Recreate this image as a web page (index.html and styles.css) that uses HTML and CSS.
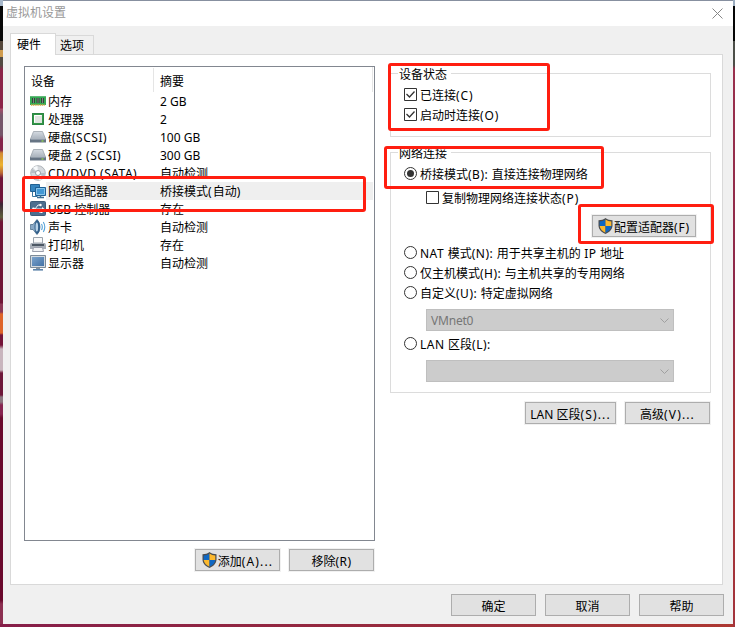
FILE: index.html
```html
<!DOCTYPE html>
<html lang="zh-CN">
<head>
<meta charset="utf-8">
<title>虚拟机设置</title>
<link rel="stylesheet" href="styles.css">
</head>
<body>
<svg width="0" height="0" class="defs">
  <defs>
    <linearGradient id="disk" x1="0" y1="0" x2="0" y2="1"><stop offset="0" stop-color="#d5dbe2"/><stop offset="1" stop-color="#a9b2bc"/></linearGradient>
    <linearGradient id="screen" x1="0" y1="0" x2="1" y2="1"><stop offset="0" stop-color="#7ba3cc"/><stop offset="1" stop-color="#4472a6"/></linearGradient>
    <symbol id="shield" viewBox="0 0 14 16">
      <path d="M7 0C5.300 1.500 2.500 2.200 0 2.300v5.400C.2 11.500 3.200 14.200 7 16c3.800-1.800 6.800-4.500 7-8.300V2.300C11.500 2.200 8.700 1.500 7 0z" fill="#4b4d50"/>
      <path d="M7 1.500C5.400 2.800 3.400 3.400 1.200 3.500V8H7z" fill="#0e67c3"/>
      <path d="M7 1.500c1.600 1.300 3.600 1.900 5.800 2V8H7z" fill="#fdb92d"/>
      <path d="M1.200 8c.3 3 2.600 5.200 5.800 6.700V8z" fill="#fdb92d"/>
      <path d="M12.800 8c-.3 3-2.600 5.200-5.800 6.700V8z" fill="#0e67c3"/>
    </symbol>
    <symbol id="hdd" viewBox="0 0 16 16">
      <path d="M3.500 2.500h9l3 7.500H.5z" fill="url(#disk)" stroke="#9aa2ab" stroke-width=".8"/>
      <path d="M0 10h16v3.500H0z" fill="#667484"/>
      <path d="M.5 10h15" stroke="#b7c0c9"/>
      <path d="M11.500 12h2" stroke="#8ed04f" stroke-width="1.400"/>
    </symbol>
  </defs>
</svg>
<div class="window">
  <header class="titlebar"><span>虚拟机设置</span>
    <svg class="close" width="11" height="11" viewBox="0 0 11 11"><path d="M.5.5l10 10M10.500.5l-10 10" stroke="#868686" fill="none"/></svg>
  </header>
  <nav class="tabs"><div class="tab active">硬件</div><div class="tab">选项</div></nav>
  <main class="panel">
    <section class="left">
      <div class="list">
        <div class="head"><span class="c1">设备</span><span class="c2">摘要</span></div>
        <div class="row"><svg viewBox="0 0 16 16"><path d="M0 3h16v9H0z" fill="#35aa55"/><path d="M0 3h16v1H0z" fill="#62ba78"/><path d="M2 5h3v5H2zM6.500 5h3v5h-3zM11 5h3v5h-3z" fill="#34423a"/><path d="M3.500 5v5M8 5v5M12.500 5v5" stroke="#8d9b92" stroke-width=".8"/><path d="M1 12h14" stroke="#d5a644" stroke-width="1.500" stroke-dasharray="1.200 .6"/></svg><span class="name">内存</span><span>2 GB</span></div>
        <div class="row"><svg viewBox="0 0 16 16"><path d="M2 2h12v12H2z" fill="#319746"/><path d="M2.500 2.500h11v11h-11z" fill="none" stroke="#2c8544"/><path d="M4 4h8v8H4z" fill="#dfe4e0"/><path d="M4.500 11.500v-7h7" fill="none" stroke="#fff"/></svg><span class="name">处理器</span><span>2</span></div>
        <div class="row"><svg><use href="#hdd"/></svg><span class="name">硬盘<i>(SCSI)</i></span><span>100 GB</span></div>
        <div class="row"><svg><use href="#hdd"/></svg><span class="name">硬盘 <i>2 (SCSI)</i></span><span>300 GB</span></div>
        <div class="row"><svg viewBox="0 0 16 16"><circle cx="8" cy="8" r="7.300" fill="#d6dade" stroke="#b0b5ba"/><path d="M8 8L3 2.500Q5 1 7.500 1zM8 8l5.500 5Q12 15 9 15z" fill="#f7fafc"/><path d="M8 8L1 8q0-2 1.500-4zM8 8h7q0 2-1 4z" fill="#b8bfc6"/><circle cx="8" cy="8" r="2.500" fill="#fff" stroke="#969ea6"/></svg><span class="name"><i>CD/DVD (SATA)</i></span><span>自动检测</span></div>
        <div class="row selected"><svg viewBox="0 0 16 16"><path d="M.5 1.500h9v7h-9z" fill="#3685bf" stroke="#236293"/><path d="M2.500 9v4.500h5" fill="none" stroke="#39769f"/><path d="M5.500 4.500h10v8h-10z" fill="#4398d4" stroke="#1d5f95"/><path d="M6.500 5.500h8v6h-8z" fill="none" stroke="#87c5eb"/><path d="M7 14.500h7M10.500 12v2" stroke="#3b6f95" stroke-width="1.500"/></svg><span class="name">网络适配器</span><span>桥接模式<i class="dots">(</i>自动<i class="dots">)</i></span></div>
        <div class="row"><svg viewBox="0 0 16 16"><rect x=".5" y=".5" width="15" height="14" rx="1" fill="#4d6e8e" stroke="#3e5d7a"/><path d="M3 8h9M5 8l3-4h2M6 8l3 3h2" fill="none" stroke="#eef4fa"/><circle cx="3.500" cy="8" r="1.400" fill="#fff"/><circle cx="10.500" cy="4" r="1.200" fill="#fff"/><path d="M12 6l2.500 2-2.500 2z" fill="#fff"/><path d="M10.500 10h2v2h-2z" fill="#fff"/></svg><span class="name">USB 控制器</span><span>存在</span></div>
        <div class="row"><svg viewBox="0 0 16 16"><path d="M.5 5.500H3L7 .5Q10 3 10 8t-3 7.500L3 10.500H.5Q-.3 8 .5 5.500z" fill="#8aa9c6" stroke="#4e6e8a" stroke-width=".8"/><path d="M7 .8Q4.500 3 4.500 8T7 15.200Q10 13 10 8T7 .8z" fill="#315f8b"/><ellipse cx="6.800" cy="8" rx="1.300" ry="4.500" fill="#b9d3e8"/><path d="M11.500 5q1.600 3 0 6M13.300 3q3 5 0 10" stroke="#57a3d8" fill="none" stroke-width="1.100"/></svg><span class="name">声卡</span><span>自动检测</span></div>
        <div class="row"><svg viewBox="0 0 16 16"><path d="M3.500.5h9V6h-9z" fill="#fafafa" stroke="#9ca4ad"/><path d="M1 6h14l1 1.500V12H0V7.500z" fill="#a8afb8"/><path d="M2 8h12" stroke="#4c5864" stroke-width="2"/><path d="M3.500 10.500h9l1 4h-11z" fill="#f2f3f5" stroke="#9b9fac"/></svg><span class="name">打印机</span><span>存在</span></div>
        <div class="row"><svg viewBox="0 0 16 16"><path d="M.5.5h15v12H.5z" fill="#d4dae0" stroke="#7d8b98"/><path d="M2 2h12v9H2z" fill="url(#screen)"/><path d="M6 13h4v1H6z" fill="#8a96a1"/><path d="M3 14.800h10" stroke="#5e84ab" stroke-width="1.600"/></svg><span class="name">显示器</span><span>自动检测</span></div>
      </div>
      <div class="actions"><button class="w86"><svg class="shield"><use href="#shield"/></svg><span>添加<i class="dots">(A)...</i></span></button><button class="w86"><span>移除<i>(R)</i></span></button></div>
    </section>
    <section class="right">
      <div class="group status"><div class="legend">设备状态</div>
        <label class="opt"><svg class="mark"><path d="M.5.5h12v12H.5z" fill="#fff" stroke="#333"/><path d="M2.500 6l3 3 5-5.500" fill="none" stroke="#333" stroke-width="1.300"/></svg><span>已连接<i class="wide">(C)</i></span></label>
        <label class="opt"><svg class="mark"><path d="M.5.5h12v12H.5z" fill="#fff" stroke="#333"/><path d="M2.500 6l3 3 5-5.500" fill="none" stroke="#333" stroke-width="1.300"/></svg><span>启动时连接<i class="wide">(O)</i></span></label>
      </div>
      <div class="group network"><div class="legend">网络连接</div>
        <label class="opt bridged"><svg class="mark"><circle cx="6.500" cy="6.500" r="6" fill="#fff" stroke="#333"/><circle cx="6.500" cy="6.500" r="3.500" fill="#333"/></svg><span>桥接模式<i>(B):</i> 直接连接物理网络</span></label>
        <label class="opt sub"><svg class="mark"><path d="M.5.5h12v12H.5z" fill="#fff" stroke="#333"/></svg><span>复制物理网络连接状态<i class="wide">(P)</i></span></label>
        <button class="config"><svg class="shield"><use href="#shield"/></svg><span>配置适配器<i class="wide">(F)</i></span></button>
        <label class="opt"><svg class="mark"><circle cx="6.500" cy="6.500" r="6" fill="#fff" stroke="#333"/></svg><span><i>NAT</i> 模式<i>(N):</i> 用于共享主机的 <i>IP</i> 地址</span></label>
        <label class="opt"><svg class="mark"><circle cx="6.500" cy="6.500" r="6" fill="#fff" stroke="#333"/></svg><span>仅主机模式<i>(H):</i> 与主机共享的专用网络</span></label>
        <label class="opt"><svg class="mark"><circle cx="6.500" cy="6.500" r="6" fill="#fff" stroke="#333"/></svg><span>自定义<i>(U):</i> 特定虚拟网络</span></label>
        <div class="select"><span>VMnet0</span><svg width="9" height="5"><path d="M.5.5l4 4 4-4" fill="none" stroke="#a0a0a0"/></svg></div>
        <label class="opt lan"><svg class="mark"><circle cx="6.500" cy="6.500" r="6" fill="#fff" stroke="#333"/></svg><span><i>LAN</i> 区段<i>(L):</i></span></label>
        <div class="select second"><svg width="9" height="5"><path d="M.5.5l4 4 4-4" fill="none" stroke="#a0a0a0"/></svg></div>
      </div>
      <div class="actions"><button class="w92"><span>LAN 区段<i class="dots">(S)...</i></span></button><button class="w86"><span>高级<i class="dots">(V)...</i></span></button></div>
    </section>
  </main>
  <footer class="footer"><button class="w86"><span>确定</span></button><button class="w86"><span>取消</span></button><button class="w86"><span>帮助</span></button></footer>
</div>
<div class="callout adapter"></div>
<div class="callout state"></div>
<div class="callout bridge"></div>
<div class="callout configure"></div>
</body>
</html>
```
FILE: styles.css
```css
* { box-sizing: border-box; }
body {
  margin: 0; width: 735px; height: 627px; overflow: hidden; padding-left: 3px;
  background:
    linear-gradient(#9badc0 0 6px, #050505 6px 41px, #4c4e48 41px 65px, #99304d 69px, #8d2848 300px, #a53336 430px, #a3343c) 733px 0 / 2px 100% no-repeat,
    linear-gradient(90deg, #861e49, #9a2c3c 60%, #ad3832) 0 624px / 100% 3px no-repeat,
    linear-gradient(#a6b7ca 0 6px, #080808 6px 41px, #55483c 41px 50px, #cf9b4d 50px 57px, #514941 57px 65px, #8b2348 70px 108px, #a74c6a 109px, #75566a 115px 135px, #84244a 139px 150px, #d18a34 153px, #edb32e 165px, #b96735 173px, #701539 178px 200px, #3c2435 204px, #5d5d3b 217px, #701636 222px 303px, #8c3855 304px 312px, #de6429 314px 333px, #741438 335px 345px, #c8b5bd 349px 370px, #6d1739 373px 395px, #8b7580 397px 402px, #862350 405px 414px, #69082c 418px 600px, #8c3051 604px 627px) 0 0 / 3px 100% no-repeat;
  color: #000; font: 12px/18px "Noto Sans", "Noto Sans CJK SC", sans-serif;
}
.defs { position: absolute; }
i { font-style: normal; letter-spacing: .5px; }
i.wide { letter-spacing: .9px; }
i.dots { letter-spacing: 1.150px; }
svg { display: block; flex: none; }
.window { width: 730px; height: 624px; background: #f0f0f0; border-top: 1px solid #8790a0; }
.titlebar { height: 25px; background: #fff; display: flex; align-items: center; justify-content: space-between; padding: 0 10px 1px 3px; color: #999; }
.tabs { display: flex; align-items: flex-end; height: 28px; padding-left: 7px; }
.tab { height: 19px; width: 38px; border: 1px solid #d9d9d9; border-bottom: 0; border-left: 0; padding: 1px 0 0 4px; white-space: nowrap; }
.tab.active { position: relative; height: 22px; width: 46px; margin-bottom: -1px; background: #fff; border-left: 1px solid #d9d9d9; padding: 2px 0 0 6px; }
.panel { width: 713px; height: 531px; margin-left: 7px; border: 1px solid #d9d9d9; background: #fff; display: flex; padding: 11px 0 0 13px; }
.left { width: 351px; }
.list { height: 475px; border: 1px solid #828790; }
.head { height: 25px; display: flex; width: 348px; padding-top: 1px; border-right: 1px solid #e5e5e5; }
.head .c1 { width: 129px; border-right: 1px solid #e5e5e5; padding: 5px 0 0 6px; }
.head .c2 { padding: 5px 0 0 6px; }
.row { height: 18px; display: flex; align-items: flex-start; padding-left: 5px; white-space: nowrap; }
.row svg { width: 16px; height: 16px; margin-top: 1px; }
.row span { padding-top: 1px; }
.row .name { width: 114px; padding-left: 2px; }
.row.selected { background: linear-gradient(#efefef, #efefef) 21px 0 / 327px 100% no-repeat; }
.actions { display: flex; justify-content: flex-end; gap: 7px; margin-top: 7px; }
button { height: 24px; padding: 0; border: 1px solid #f1f1f1; background: #e1e1e1; box-shadow: inset 0 0 0 1px #adadad; color: #000; font: inherit; display: flex; align-items: center; justify-content: center; white-space: nowrap; }
button span { padding-top: 3px; }
.w86 { width: 87px; }
.w92 { width: 93px; }
.shield { width: 15px; height: 16px; margin-right: 1px; }
.right { width: 321px; margin: 7px 0 0 15px; }
.group { border: 1px solid #dcdcdc; position: relative; padding-left: 13px; }
.legend { width: 53px; height: 19px; margin: -9px 0 0 -6px; padding: 1px 0 0 1px; background: #fff; }
.status { height: 64px; }
.network { height: 241px; margin-top: 15px; }
.opt { display: flex; align-items: flex-start; height: 20px; white-space: nowrap; word-spacing: .4px; }
.opt span { padding-top: 2px; }
.mark { width: 13px; height: 13px; margin: 3px 3px 0 0; }
.legend + .opt { margin-top: 1px; }
.opt.bridged { height: 24px; }
.opt.sub { margin-left: 22px; }
.config { width: 106px; margin: 6px 0 5px 187px; }
.select { width: 248px; height: 22px; margin: 6px 0 0 22px; background: #ccc; border: 1px solid #bfbfbf; color: #767676; display: flex; align-items: center; justify-content: space-between; padding: 0 4px; }
.select span { padding-top: 1px; letter-spacing: -.2px; }
.select.second { justify-content: flex-end; }
.opt.lan { margin-top: 3px; }
.right > .actions { margin-top: 8px; }
.footer { display: flex; justify-content: flex-end; gap: 7px; padding: 8px 8px 0 0; }
.footer button { border-color: #f0f0f0; }
.callout { position: absolute; border: 3px solid #ff1e10; border-radius: 3px; }
.adapter { left: 22px; top: 176px; width: 344px; height: 36px; }
.state { left: 388px; top: 63px; width: 162px; height: 68px; }
.bridge { left: 384px; top: 146px; width: 220px; height: 43px; }
.configure { left: 578px; top: 204px; width: 136px; height: 40px; }
```
